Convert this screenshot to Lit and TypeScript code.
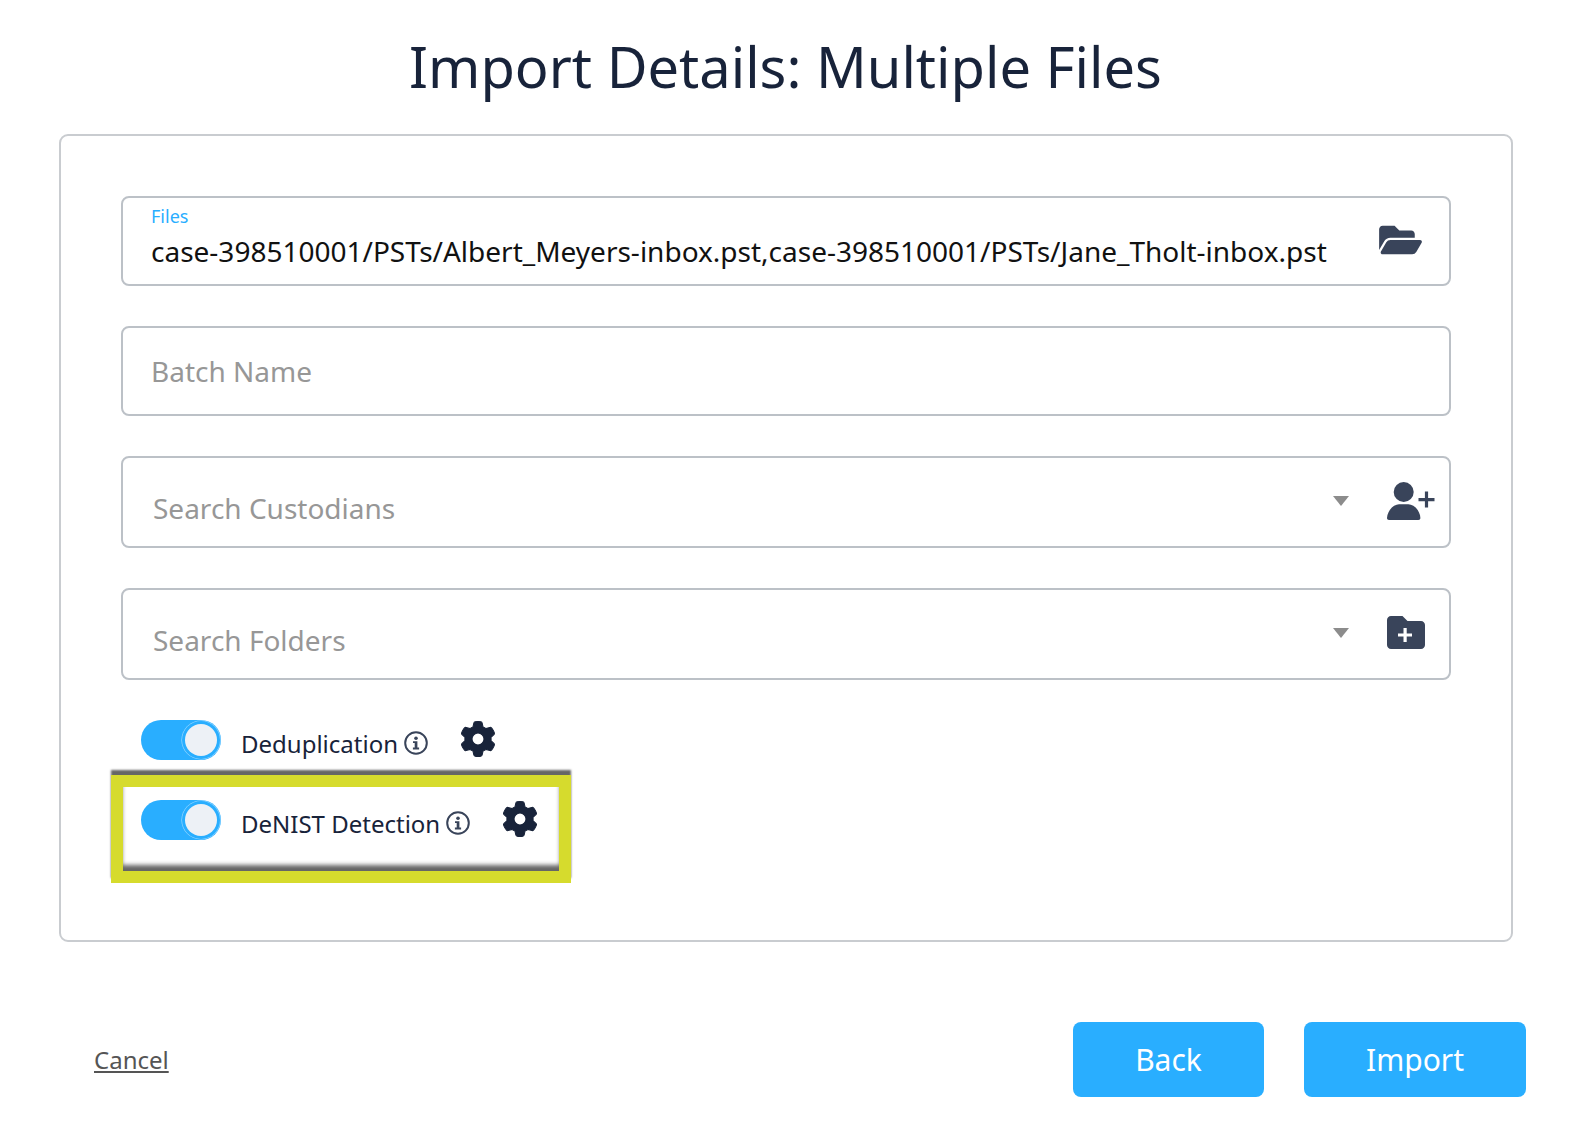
import { LitElement, html, css } from "lit";
import { customElement } from "lit/decorators.js";

const gear = html`<svg class="gear" viewBox="-8 -8 528 528"><path fill="currentColor" stroke="currentColor" stroke-width="16" stroke-linejoin="round" d="M495.9 166.6c3.2 8.7 .5 18.4-6.4 24.6l-43.3 39.4c1.1 8.3 1.7 16.8 1.7 25.4s-.6 17.1-1.7 25.4l43.3 39.4c6.9 6.2 9.6 15.9 6.4 24.6c-4.4 11.9-9.7 23.3-15.8 34.3l-4.7 8.1c-6.6 11-14 21.4-22.1 31.2c-5.9 7.2-15.7 9.6-24.5 6.8l-55.7-17.7c-13.4 10.3-28.2 18.9-44 25.4l-12.5 57.1c-2 9.1-9 16.3-18.2 17.8c-13.8 2.3-28 3.5-42.5 3.5s-28.7-1.2-42.5-3.5c-9.2-1.5-16.2-8.7-18.2-17.8l-12.5-57.1c-15.8-6.5-30.6-15.1-44-25.4L83.1 425.9c-8.8 2.8-18.6 .3-24.5-6.8c-8.1-9.8-15.5-20.2-22.1-31.2l-4.7-8.1c-6.1-11-11.4-22.4-15.8-34.3c-3.2-8.7-.5-18.4 6.4-24.6l43.3-39.4C64.6 273.1 64 264.6 64 256s.6-17.1 1.7-25.4L22.4 191.2c-6.9-6.2-9.6-15.9-6.4-24.6c4.4-11.9 9.7-23.3 15.8-34.3l4.7-8.1c6.6-11 14-21.4 22.1-31.2c5.9-7.2 15.7-9.6 24.5-6.8l55.7 17.7c13.4-10.3 28.2-18.9 44-25.4l12.5-57.1c2-9.1 9-16.3 18.2-17.8C227.3 1.2 241.5 0 256 0s28.700 1.200 42.500 3.500c9.200 1.500 16.200 8.700 18.200 17.800l12.500 57.100c15.800 6.500 30.600 15.100 44 25.400l55.700-17.700c8.800-2.800 18.600-.3 24.500 6.800c8.100 9.800 15.500 20.200 22.100 31.200l4.700 8.100c6.100 11 11.400 22.400 15.800 34.300zM256 344a88 88 0 1 0 0-176 88 88 0 1 0 0 176z"/></svg>`;

const info = html`<svg class="info" viewBox="0 0 24 24"><circle cx="12" cy="12" r="10.8" fill="none" stroke="currentColor" stroke-width="2"/><circle cx="12" cy="7.2" r="1.8" fill="currentColor"/><path fill="currentColor" d="M9 10.200h4.400v6.400h1.700v1.900H8.900v-1.900h1.800v-4.500H9z"/></svg>`;

const folderOpen = html`<svg class="i-folder-open" viewBox="0 0 576 512"><path fill="currentColor" d="M572.694 292.093L500.27 416.248A63.997 63.997 0 0 1 444.989 448H45.025c-18.523 0-30.064-20.093-20.731-36.093l72.424-124.155A64 64 0 0 1 152 256h399.964c18.523 0 30.064 20.093 20.73 36.093zM152 224h328v-48c0-26.51-21.49-48-48-48H272l-64-64H48C21.49 64 0 85.49 0 112v278.046l69.077-118.418C86.214 242.25 117.989 224 152 224z"/></svg>`;

const userPlus = html`<svg class="i-user" viewBox="0 0 48 38"><circle cx="16.7" cy="10" r="10" fill="currentColor"/><path fill="currentColor" d="M2 38c-1.200 0-2-.8-2-2C.5 28 7 22.300 12 22.300h9.400C26.500 22.300 33 28 33.400 36c0 1.200-.8 2-2 2z"/><path fill="none" stroke="currentColor" stroke-width="3.2" d="M31.500 17.600h16M39.500 9.600v16"/></svg>`;

const folderPlus = html`<svg class="i-folder-plus" viewBox="0 0 38 33"><path fill="currentColor" d="M4 0h11.500l5 5H34c2.200 0 4 1.800 4 4v20c0 2.200-1.800 4-4 4H4c-2.200 0-4-1.800-4-4V4c0-2.200 1.800-4 4-4z"/><path fill="#fff" d="M16.500 12h3.200v5.400H25v3.200h-5.300V26h-3.200v-5.400H11v-3.200h5.500z"/></svg>`;

@customElement("app-root")
export class AppRoot extends LitElement {
  static styles = css`
    :host {
      display: block;
      width: 1572px;
      height: 1142px;
      box-sizing: border-box;
      background: #fff;
      font-family: "Noto Sans", "Open Sans", sans-serif;
      color: #18233a;
      overflow: hidden;
    }
    .page {
      display: flex;
      flex-direction: column;
      padding: 25px 46px 0 59px;
    }
    h1 {
      margin: 0 14px 0 0;
      height: 109px;
      font-size: 56px;
      line-height: 82px;
      font-weight: 400;
      text-align: center;
      color: #18233a;
    }
    .card {
      box-sizing: border-box;
      width: 1454px;
      height: 808px;
      border: 2px solid #c9ccd0;
      border-radius: 9px;
      padding: 60px 60px 0;
      display: flex;
      flex-direction: column;
    }
    .fields {
      display: flex;
      flex-direction: column;
      gap: 40px;
    }
    .field {
      box-sizing: border-box;
      height: 90px;
      width: 1330px;
      border: 2px solid #bcc1c7;
      border-radius: 8px;
      display: flex;
      align-items: center;
      padding-left: 28px;
      position: relative;
      font-size: 28px;
    }
    .field.tall { height: 92px; }
    .files { flex-direction: column; align-items: flex-start; justify-content: flex-start; padding-top: 7px; }
    .files label { font-size: 18px; line-height: 22px; color: #29aeff; }
    .files .value { font-size: 28px; line-height: 38px; margin-top: 5px; color: #111; white-space: nowrap; }
    .placeholder { color: #979797; }
    .tall .placeholder { margin-left: 2px; margin-top: 12px; flex: 1; }
    .caret {
      width: 0; height: 0;
      border-left: 8px solid transparent;
      border-right: 8px solid transparent;
      border-top: 10px solid #8c8c8c;
      margin-right: 38px;
      margin-top: -3px;
    }
    .icon-slot { color: #39445a; display: flex; align-items: center; }
    .folder-slot { position: absolute; right: 27px; top: 23px; }
    .i-folder-open { width: 43px; height: 38px; display: block; }
    .i-user { width: 48px; height: 38px; display: block; }
    .i-folder-plus { width: 38px; height: 33px; display: block; }
    .user-slot { margin-right: 14px; margin-top: -2px; }
    .fplus-slot { margin-right: 24px; margin-top: -3px; }
    .toggles {
      display: flex;
      flex-direction: column;
      gap: 40px;
      padding: 40px 0 0 20px;
    }
    .row {
      display: flex;
      align-items: flex-start;
      height: 40px;
      position: relative;
      font-size: 24px;
      color: #18233a;
    }
    .toggle {
      width: 80px;
      height: 40px;
      border-radius: 20px;
      background: #29aeff;
      position: relative;
      flex: none;
      margin-right: 20px;
      display: flex;
      justify-content: flex-end;
      align-items: center;
      padding-right: 4px;
      box-sizing: border-box;
    }
    .thumb {
      width: 32px;
      height: 32px;
      border-radius: 50%;
      background: #edf1f6;
      box-shadow: 0 0 0 3px #29aeff, 0 0 0 3.6px rgba(255, 255, 255, 0.55);
    }
    .label { line-height: 34px; margin-top: 7px; white-space: nowrap; }
    .info { width: 24px; height: 24px; color: #39445a; margin-left: 6px; margin-top: 11px; flex: none; }
    .gear { width: 36px; height: 36px; color: #18233a; margin-left: 32px; margin-top: 1px; flex: none; }
    .highlight {
      position: absolute;
      left: -30px;
      top: -25px;
      width: 460px;
      height: 108px;
      box-sizing: border-box;
      border: 12px solid #d6db2d;
      box-shadow: 0 -5px 2px #666;
      pointer-events: none;
    }
    .highlight::after {
      content: "";
      position: absolute;
      inset: 0;
      box-shadow: inset 0 -7px 4px -1px #666;
    }
    .footer {
      display: flex;
      align-items: center;
      justify-content: space-between;
      margin-top: 80px;
      margin-left: 35px;
    }
    .cancel { font-size: 24px; color: #555; text-decoration: underline; }
    .buttons { display: flex; gap: 40px; }
    button {
      height: 75px;
      border: 0;
      border-radius: 8px;
      background: #29aeff;
      color: #fff;
      font: inherit;
      font-size: 30px;
      padding: 0;
    }
    .back { width: 191px; }
    .import { width: 222px; }
  `;

  render() {
    return html`
      <div class="page">
        <h1>Import Details: Multiple Files</h1>
        <div class="card">
          <div class="fields">
            <div class="field files">
              <label>Files</label>
              <div class="value">case-398510001/PSTs/Albert_Meyers-inbox.pst,case-398510001/PSTs/Jane_Tholt-inbox.pst</div>
              <span class="icon-slot folder-slot">${folderOpen}</span>
            </div>
            <div class="field"><span class="placeholder">Batch Name</span></div>
            <div class="field tall">
              <span class="placeholder">Search Custodians</span>
              <span class="caret"></span>
              <span class="icon-slot user-slot">${userPlus}</span>
            </div>
            <div class="field tall">
              <span class="placeholder">Search Folders</span>
              <span class="caret"></span>
              <span class="icon-slot fplus-slot">${folderPlus}</span>
            </div>
          </div>
          <div class="toggles">
            <div class="row">
              <span class="toggle"><span class="thumb"></span></span>
              <span class="label">Deduplication</span>${info}${gear}
            </div>
            <div class="row">
              <span class="toggle"><span class="thumb"></span></span>
              <span class="label">DeNIST Detection</span>${info}${gear}
              <span class="highlight"></span>
            </div>
          </div>
        </div>
        <div class="footer">
          <a class="cancel">Cancel</a>
          <div class="buttons">
            <button class="back">Back</button>
            <button class="import">Import</button>
          </div>
        </div>
      </div>
    `;
  }
}
